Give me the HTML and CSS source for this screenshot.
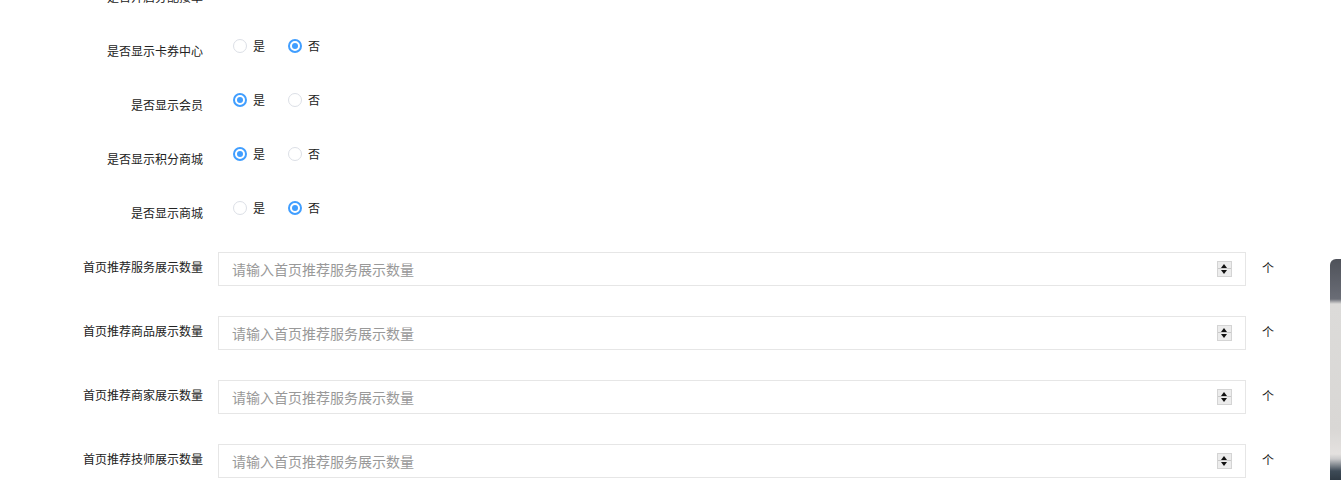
FILE: index.html
```html
<!DOCTYPE html>
<html>
  <head>
    <meta charset="UTF-8" />
    <meta name="viewport" content="width=device-width, initial-scale=1.0" />
    <title>首页设置</title>
    <link rel="stylesheet" href="styles.css">
  </head>
  <body>
    <div class="form">
      <div class="form-item">
        <label class="item-label">是否开启分配接单</label>
        <div class="radio-group">
          <span class="radio"><i class="radio-dot checked"></i>是</span>
          <span class="radio"><i class="radio-dot"></i>否</span>
        </div>
      </div>

      <div class="form-item">
        <label class="item-label">是否显示卡券中心</label>
        <div class="radio-group">
          <span class="radio"><i class="radio-dot"></i>是</span>
          <span class="radio"><i class="radio-dot checked"></i>否</span>
        </div>
      </div>

      <div class="form-item">
        <label class="item-label">是否显示会员</label>
        <div class="radio-group">
          <span class="radio"><i class="radio-dot checked"></i>是</span>
          <span class="radio"><i class="radio-dot"></i>否</span>
        </div>
      </div>

      <div class="form-item">
        <label class="item-label">是否显示积分商城</label>
        <div class="radio-group">
          <span class="radio"><i class="radio-dot checked"></i>是</span>
          <span class="radio"><i class="radio-dot"></i>否</span>
        </div>
      </div>

      <div class="form-item">
        <label class="item-label">是否显示商城</label>
        <div class="radio-group">
          <span class="radio"><i class="radio-dot"></i>是</span>
          <span class="radio"><i class="radio-dot checked"></i>否</span>
        </div>
      </div>

      <div class="form-item input-item">
        <label class="item-label" for="serviceNum">首页推荐服务展示数量</label>
        <div class="number-box">
          <input type="text" id="serviceNum" placeholder="请输入首页推荐服务展示数量" />
          <span class="spinner"><b class="up"></b><b class="down"></b></span>
        </div>
        <span class="unit">个</span>
      </div>

      <div class="form-item input-item">
        <label class="item-label" for="goodsNum">首页推荐商品展示数量</label>
        <div class="number-box">
          <input type="text" id="goodsNum" placeholder="请输入首页推荐服务展示数量" />
          <span class="spinner"><b class="up"></b><b class="down"></b></span>
        </div>
        <span class="unit">个</span>
      </div>

      <div class="form-item input-item">
        <label class="item-label" for="shopNum">首页推荐商家展示数量</label>
        <div class="number-box">
          <input type="text" id="shopNum" placeholder="请输入首页推荐服务展示数量" />
          <span class="spinner"><b class="up"></b><b class="down"></b></span>
        </div>
        <span class="unit">个</span>
      </div>

      <div class="form-item input-item">
        <label class="item-label" for="techNum">首页推荐技师展示数量</label>
        <div class="number-box">
          <input type="text" id="techNum" placeholder="请输入首页推荐服务展示数量" />
          <span class="spinner"><b class="up"></b><b class="down"></b></span>
        </div>
        <span class="unit">个</span>
      </div>
    </div>

    <div class="side-photo"></div>
  </body>
</html>
```

FILE: styles.css
```css
* {
  box-sizing: border-box;
  margin: 0;
  padding: 0;
}

html,
body {
  overflow: hidden;
}

body {
  font-family: "Noto Sans CJK SC", "Noto Sans", sans-serif;
  font-size: 12px;
  color: #333;
  background-color: #fff;
}

.form {
  margin-top: -35px;
}

.form-item {
  display: flex;
  align-items: center;
  height: 54px;
}

.item-label {
  width: 203px;
  text-align: right;
  line-height: 20px;
  padding-top: 10px;
  color: #222;
}

.radio-group {
  display: flex;
  align-items: center;
  margin-left: 30px;
  height: 20px;
}

.radio {
  display: flex;
  align-items: center;
  margin-right: 23px;
  line-height: 20px;
  color: #222;
}

.radio-dot {
  display: inline-block;
  position: relative;
  width: 14px;
  height: 14px;
  border: 1px solid #dcdfe6;
  border-radius: 50%;
  margin-right: 6px;
  background-color: #fff;
}

.radio-dot.checked {
  border: 2px solid #409eff;
}

.radio-dot.checked::after {
  content: "";
  position: absolute;
  left: 2px;
  top: 2px;
  width: 6px;
  height: 6px;
  border-radius: 50%;
  background-color: #409eff;
}

.input-item {
  height: 64px;
}

.input-item .item-label {
  padding-top: 0;
}

.number-box {
  display: flex;
  align-items: center;
  margin-left: 15px;
  margin-top: 3px;
  width: 1028px;
  height: 34px;
  border: 1px solid #e6e6e6;
  padding: 0 13px 0 13px;
}

.number-box input {
  flex: 1;
  border: none;
  outline: none;
  font-family: inherit;
  font-size: 14px;
  color: #333;
  background: transparent;
}

.number-box input::placeholder {
  color: #999;
}

.spinner {
  display: flex;
  flex-direction: column;
  width: 15px;
  height: 16px;
  border: 1px solid #d4d4d4;
  background-color: #ececec;
}

.spinner b {
  position: relative;
  flex: 1;
}

.spinner b.up {
  border-bottom: 1px solid #c8c8c8;
}

.spinner b::after {
  content: "";
  position: absolute;
  left: 3px;
  top: 2px;
  border-left: 3.5px solid transparent;
  border-right: 3.5px solid transparent;
}

.spinner b.up::after {
  border-bottom: 4px solid #111;
}

.spinner b.down::after {
  top: 1px;
  border-top: 4px solid #111;
}

.unit {
  margin-left: 16px;
  color: #222;
}

.side-photo {
  position: fixed;
  left: 1330px;
  top: 259px;
  width: 11px;
  height: 221px;
  border-top-left-radius: 6px;
  background: linear-gradient(
    to bottom,
    #4f525a 0,
    #6a6d76 40px,
    #dcdbd9 45px,
    #d9d7d5 170px,
    #e4e1df 195px,
    #c9c9ca 200px,
    #3e4b57 212px,
    #2f3a44 221px
  );
}
```
